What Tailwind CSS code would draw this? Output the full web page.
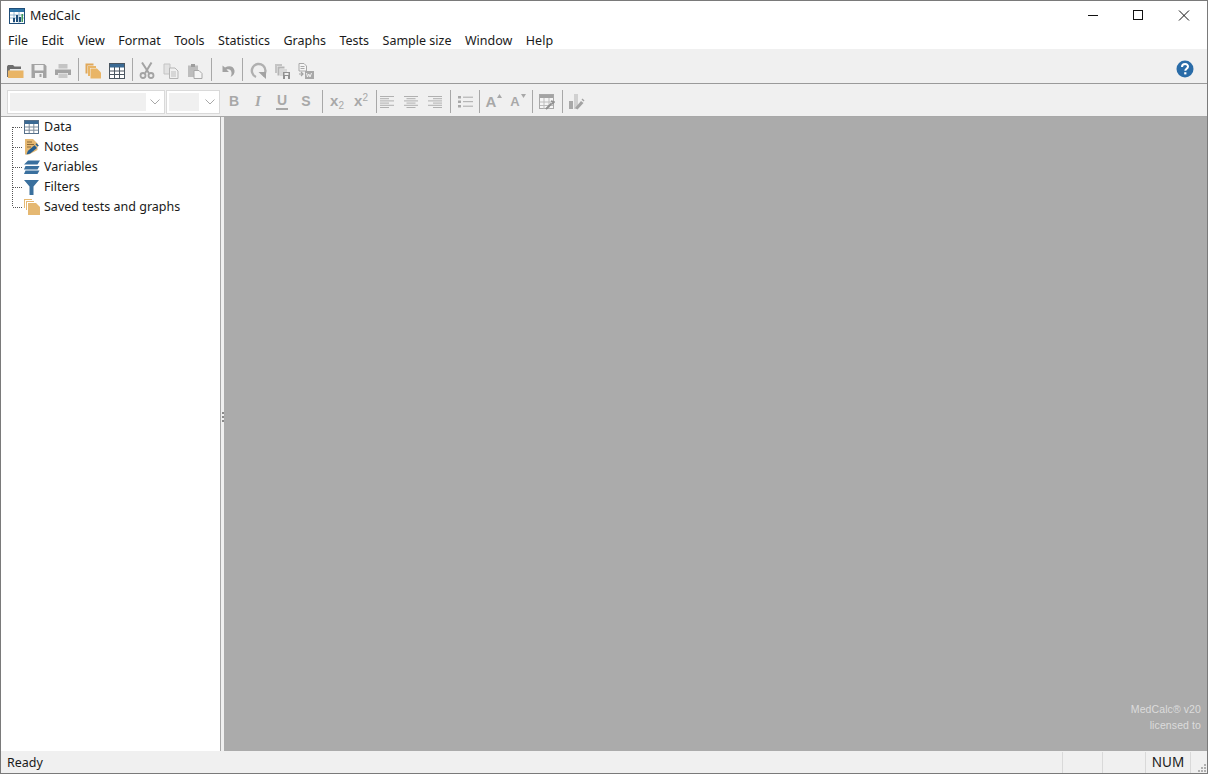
<!DOCTYPE html>
<html lang="en">
<head>
<meta charset="UTF-8">
<title>MedCalc</title>
<script src="https://cdn.jsdelivr.net/npm/@tailwindcss/browser@4"></script>
</head>
<body class="bg-white overflow-hidden">
<div class="w-[1208px] h-[774px] flex flex-col border border-[#7a7a7a] font-['Noto_Sans',sans-serif] text-[12.5px] text-[#1a1a1a] overflow-hidden">

  <!-- title bar -->
  <div class="h-[29px] flex items-center shrink-0 bg-white">
    <svg class="ml-[8px] w-4 h-4" viewBox="0 0 16 16">
      <rect x=".5" y=".5" width="15" height="15" fill="#fff" stroke="#1f4e79"/>
      <rect x="1" y="1" width="14" height="3" fill="#2e75a8"/>
      <path d="M1 7h14M1 10h14M5 4v11M10 4v11" stroke="#7fa8c8" stroke-width=".8"/>
      <path d="M4 14V10h2v4zM7 14V7h2v7zM10 14V9h2v5z" fill="#1f4e79"/>
      <path d="M12.5 14V6h1.500v8z" fill="#3f9a5a"/>
    </svg>
    <span class="ml-[5px] pt-[2px]">MedCalc</span>
    <div class="ml-auto flex items-center">
      <svg class="w-[46px] h-[29px]" viewBox="0 0 46 29"><path d="M19 14.500h10" stroke="#111"/></svg>
      <svg class="w-[46px] h-[29px]" viewBox="0 0 46 29"><rect x="18.500" y="9.500" width="9" height="9" fill="none" stroke="#111"/></svg>
      <svg class="w-[46px] h-[29px]" viewBox="0 0 46 29"><path d="M18 9.500l10 10M28 9.500l-10 10" stroke="#111"/></svg>
    </div>
  </div>

  <!-- menu -->
  <div class="h-[19px] flex items-center shrink-0 bg-white pl-[7px] gap-[13.5px] leading-none pt-[4px]">
    <span>File</span><span>Edit</span><span>View</span><span>Format</span><span>Tools</span><span>Statistics</span><span>Graphs</span><span>Tests</span><span>Sample size</span><span>Window</span><span>Help</span>
  </div>

  <!-- main toolbar -->
  <div class="h-[35px] flex items-center shrink-0 bg-[#f0f0f0] border-b border-[#9a9a9a] pl-[2px] pt-[9px]">
    <div class="w-6 flex justify-center"><svg class="w-[17px] h-[16px]" viewBox="0 0 17 16"><path d="M0 3.500 1 2h5l1.500 1.500H14V6H3L1 14H0z" fill="#6d6d6d"/><path d="M1 15V7.500h15.500V15z" fill="#e9b566"/></svg></div>
    <div class="w-6 flex justify-center"><svg class="w-[16px] h-[16px]" viewBox="0 0 16 16"><path d="M.5 1h13l2 2v12H.5z" fill="#a3a3a3"/><rect x="3.500" y="2" width="9" height="5.500" fill="#f0f0f0"/><rect x="4" y="10" width="8" height="5" fill="#f0f0f0"/><rect x="8.500" y="11" width="2" height="3" fill="#a3a3a3"/></svg></div>
    <div class="w-6 flex justify-center"><svg class="w-[16px] h-[16px]" viewBox="0 0 16 16"><rect x="3.500" y="1" width="9" height="4.500" fill="#c4c4c4"/><path d="M0 6.500h16V12h-3v-2H3v2H0z" fill="#a3a3a3"/><rect x="3.500" y="10.500" width="9" height="4.500" fill="#c9c9c9"/></svg></div>
    <div class="w-px h-[23px] -mt-[3px] ml-[3px] mr-[2px] bg-[#a8a8a8]"></div>
    <div class="w-6 flex justify-center"><svg class="w-[16px] h-[16px]" viewBox="0 0 16 16"><path d="M.5.500h8v2H2.500v8H.5z" fill="#e0a85a"/><path d="M3 3h8v2H5v8H3z" fill="#e9b566"/><path d="M5.500 5.500H12L16 9.500V15.500H5.500z" fill="#e9b566"/></svg></div>
    <div class="w-6 flex justify-center"><svg class="w-[16px] h-[16px]" viewBox="0 0 16 16"><rect x=".5" y=".5" width="15" height="15" fill="#fff" stroke="#4a5560"/><rect x="1" y="1" width="14" height="3.500" fill="#3a6a94"/><path d="M1 8h14M1 11.500h14M5.500 4v11M10.500 4v11" stroke="#4a5560"/></svg></div>
    <div class="w-px h-[23px] -mt-[3px] ml-[3px] mr-[2px] bg-[#a8a8a8]"></div>
    <div class="w-6 flex justify-center"><svg class="w-[16px] h-[17px]" viewBox="0 0 16 17"><path d="M3 .5 9.800 11M12.500 .5 6.200 11" stroke="#a3a3a3" stroke-width="2" fill="none"/><circle cx="4" cy="13.500" r="2.500" fill="none" stroke="#a3a3a3" stroke-width="1.800"/><circle cx="12" cy="13.500" r="2.500" fill="none" stroke="#a3a3a3" stroke-width="1.800"/></svg></div>
    <div class="w-6 flex justify-center"><svg class="w-[16px] h-[16px]" viewBox="0 0 16 16"><path d="M1 1h6v10H1z" fill="#e2e2e2" stroke="#c4c4c4"/><path d="M6.500 5H12l3 3v7.500H6.500z" fill="#f0f0f0" stroke="#b5b5b5"/><path d="M8 9h5M8 11h5M8 13h5" stroke="#bdbdbd"/></svg></div>
    <div class="w-6 flex justify-center"><svg class="w-[16px] h-[16px]" viewBox="0 0 16 16"><path d="M1 2.500h10V14H1z" fill="#bdbdbd"/><rect x="4" y="1" width="4" height="3" fill="#9d9d9d"/><path d="M7 7.500h5l3 3v5H7z" fill="#f5f5f5" stroke="#a8a8a8"/></svg></div>
    <div class="w-px h-[23px] -mt-[3px] ml-[4px] mr-[3px] bg-[#a8a8a8]"></div>
    <div class="w-6 flex justify-center"><svg class="w-[16px] h-[14px]" viewBox="0 0 16 14"><path d="M3.500 1.500v6.500h6.500L7.500 5.500c2.500-.8 4.500 0 5 3 .2 1.500-.2 3-1 4.500 3-1.500 4.500-4 4-6.500C14.800 2.500 10.500 1 6 3.500z" fill="#a3a3a3"/></svg></div>
    <div class="w-px h-[23px] -mt-[3px] ml-[3px] mr-[3px] bg-[#a8a8a8]"></div>
    <div class="w-6 flex justify-center"><svg class="w-[17px] h-[17px]" viewBox="0 0 17 17"><path d="M6 15A6.800 6.800 0 1 1 13 14" fill="none" stroke="#b0b0b0" stroke-width="2.400"/><path d="M8.500 10h7.500v7z" fill="#a3a3a3"/></svg></div>
    <div class="w-6 flex justify-center"><svg class="w-[16px] h-[16px]" viewBox="0 0 16 16"><path d="M1 1h7v2H3v7H1z" fill="#c4c4c4"/><path d="M3.500 3.500h7v2h-5v7h-2z" fill="#b5b5b5"/><rect x="6" y="6" width="7" height="7" fill="#d8d8d8"/><path d="M9 9h7v7H9z" fill="#909090"/><rect x="10.500" y="10" width="4" height="2" fill="#f0f0f0"/><rect x="11" y="13" width="3" height="3" fill="#f0f0f0"/></svg></div>
    <div class="w-6 flex justify-center"><svg class="w-[16px] h-[16px]" viewBox="0 0 16 16"><path d="M1 .5h5l2.500 2.500V8H1z" fill="#f5f5f5" stroke="#a8a8a8"/><path d="M2.500 3.500h4M2.500 5.500h4" stroke="#a8a8a8"/><path d="M1 11h4m-2-2 2 2-2 2" fill="none" stroke="#a3a3a3" stroke-width="1.200"/><rect x="7" y="8" width="9" height="8" fill="#a8a8a8"/><path d="M8.500 10l1 4 1.300-3 1.200 3 1.500-4" stroke="#f0f0f0" fill="none"/></svg></div>
    <svg class="ml-auto mr-[13px] -mt-[3px] w-[18px] h-[18px]" viewBox="0 0 18 18"><circle cx="9" cy="9" r="8.500" fill="#2a6ca8"/><path d="M6 7c0-4 6.300-3.800 6-.3-.2 2-2.700 2-2.700 4" fill="none" stroke="#fff" stroke-width="2"/><rect x="8.200" y="12.200" width="2.200" height="2.200" fill="#fff"/></svg>
  </div>

  <!-- format toolbar -->
  <div class="h-[33px] flex items-center shrink-0 bg-[#f0f0f0] border-b border-[#a8a8a8] pl-[6px] pt-[3px]">
    <div class="w-[158px] h-[24px] flex items-center bg-white border border-[#d9d9d9] pl-[2px]">
      <div class="w-[136px] h-[18px] bg-[#f0f0f0]"></div>
      <svg class="ml-[4px] w-[10px] h-[6px]" viewBox="0 0 10 6"><path d="M.5.500 5 5 9.500.5" fill="none" stroke="#a8a8a8"/></svg>
    </div>
    <div class="ml-[1px] w-[54px] h-[24px] flex items-center bg-white border border-[#d9d9d9] pl-[2px]">
      <div class="w-[30px] h-[18px] bg-[#f0f0f0]"></div>
      <svg class="ml-[6px] w-[10px] h-[6px]" viewBox="0 0 10 6"><path d="M.5.500 5 5 9.500.5" fill="none" stroke="#a8a8a8"/></svg>
    </div>
    <div class="w-[24px] ml-[2px] text-center font-['Liberation_Sans',sans-serif] font-bold text-[14px] text-[#a8a8a8]">B</div>
    <div class="w-[24px] text-center font-['Liberation_Serif',serif] font-bold italic text-[15px] text-[#a8a8a8]">I</div>
    <div class="w-[24px] flex justify-center"><span class="font-['Liberation_Sans',sans-serif] font-bold text-[14px] text-[#a8a8a8] border-b-2 border-[#a8a8a8] px-[1px] leading-[15px]">U</span></div>
    <div class="w-[24px] text-center font-['Liberation_Sans',sans-serif] font-bold text-[14px] text-[#a8a8a8]">S</div>
    <div class="w-px h-[23px] ml-[4px] mr-[2px] bg-[#a8a8a8]"></div>
    <div class="w-[24px] text-center font-['Liberation_Sans',sans-serif] font-bold text-[15px] text-[#a8a8a8]">x<sub class="text-[10px] font-normal">2</sub></div>
    <div class="w-[24px] text-center font-['Liberation_Sans',sans-serif] font-bold text-[15px] text-[#a8a8a8]">x<sup class="text-[10px] font-normal">2</sup></div>
    <div class="w-px h-[23px] ml-[3px] mr-[-2px] bg-[#a8a8a8]"></div>
    <div class="w-[24px] flex justify-center"><svg class="w-[14px] h-[12px]" viewBox="0 0 14 12"><path d="M0 .5h14M0 2.700h9M0 4.900h14M0 7.100h9M0 9.300h14M0 11.500h9" stroke="#a8a8a8" stroke-width=".9"/></svg></div>
    <div class="w-[24px] flex justify-center"><svg class="w-[14px] h-[12px]" viewBox="0 0 14 12"><path d="M0 .5h14M2.500 2.700h9M0 4.900h14M2.500 7.100h9M0 9.300h14M2.500 11.500h9" stroke="#a8a8a8" stroke-width=".9"/></svg></div>
    <div class="w-[24px] flex justify-center"><svg class="w-[14px] h-[12px]" viewBox="0 0 14 12"><path d="M0 .5h14M5 2.700h9M0 4.900h14M5 7.100h9M0 9.300h14M5 11.500h9" stroke="#a8a8a8" stroke-width=".9"/></svg></div>
    <div class="w-px h-[23px] ml-[3px] mr-[3px] bg-[#a8a8a8]"></div>
    <div class="w-[22px] flex justify-center"><svg class="w-[15px] h-[12px]" viewBox="0 0 15 12"><rect y="0" width="3" height="2.500" fill="#a8a8a8"/><rect y="4.500" width="3" height="2.500" fill="#a8a8a8"/><rect y="9" width="3" height="2.500" fill="#a8a8a8"/><path d="M5 1.200h10M5 5.700h10M5 10.200h10" stroke="#a8a8a8"/></svg></div>
    <div class="w-px h-[23px] ml-[3px] mr-[2px] bg-[#a8a8a8]"></div>
    <div class="w-[24px] flex justify-center items-start gap-px font-['Liberation_Sans',sans-serif] font-bold text-[#a8a8a8]">
      <span class="text-[15px] leading-[18px]">A</span>
      <svg class="w-[5px] h-[4px] mt-[1px]" viewBox="0 0 5 4"><path d="M0 4 2.500 0 5 4z" fill="#a8a8a8"/></svg>
    </div>
    <div class="w-[24px] flex justify-center items-start gap-px font-['Liberation_Sans',sans-serif] font-bold text-[#a8a8a8]">
      <span class="text-[13px] leading-[18px]">A</span>
      <svg class="w-[5px] h-[4px] mt-[1px]" viewBox="0 0 5 4"><path d="M0 0h5L2.500 4z" fill="#a8a8a8"/></svg>
    </div>
    <div class="w-px h-[23px] ml-[2px] mr-[2px] bg-[#a8a8a8]"></div>
    <div class="w-[24px] flex justify-center"><svg class="w-[16px] h-[16px]" viewBox="0 0 16 16"><rect x=".5" y=".5" width="14" height="14" fill="#f5f5f5" stroke="#a8a8a8"/><rect x="1" y="1" width="13" height="3" fill="#a3a3a3"/><path d="M1 8h13M1 11.500h13M5 4v11M10 4v11" stroke="#bdbdbd"/><path d="M7 15l5.500-5.500M12 7l3 1-2 2" stroke="#909090" stroke-width="1.800" fill="none"/></svg></div>
    <div class="w-px h-[23px] ml-[3px] mr-[2px] bg-[#a8a8a8]"></div>
    <div class="w-[24px] flex justify-center"><svg class="w-[16px] h-[16px]" viewBox="0 0 16 16"><rect x="0" y="7" width="4" height="8" fill="#a8a8a8"/><rect x="5" y="0" width="4" height="15" fill="#d0d0d0"/><path d="M6 14l6-7 2.500 2-6 6.500z" fill="#a3a3a3"/><path d="M12.500 5.500l1-1 2 2-1 1z" fill="#a3a3a3"/></svg></div>
  </div>

  <!-- body -->
  <div class="flex-1 flex min-h-0">
    <div class="w-[219px] shrink-0 bg-white">
      <div class="h-5 flex items-center pl-[11px]">
        <svg class="w-[12px] h-5" viewBox="0 0 12 20"><path d="M.5 10v10M1 10.500h10" stroke="#555" stroke-dasharray="1 1"/></svg>
        <svg class="w-[15px] h-[14px]" viewBox="0 0 15 14"><rect x=".5" y=".5" width="14" height="13" fill="#fff" stroke="#56708a"/><rect x="1" y="1" width="13" height="3" fill="#3a6a94"/><path d="M1 7h13M1 10.200h13M5.200 4v9M9.800 4v9" stroke="#7d8c9a"/></svg>
        <span class="ml-[5px]">Data</span>
      </div>
      <div class="h-5 flex items-center pl-[11px]">
        <svg class="w-[12px] h-5" viewBox="0 0 12 20"><path d="M.5 0v20M1 10.500h10" stroke="#555" stroke-dasharray="1 1"/></svg>
        <svg class="w-[15px] h-[16px]" viewBox="0 0 15 16"><path d="M1 0h8l4.500 4.500V11L5 15.500H1z" fill="#e5b872"/><path d="M3 3h5M3 5.500h7M3 8h4" stroke="#8a6a3a"/><path d="M2.500 15.500 3.800 12 10.500 6.300l2.500 2.700-6.800 5.400z" fill="#245d8f"/><path d="M11.500 5.300l1-1 2.300 2.300-1 1.200z" fill="#245d8f"/></svg>
        <span class="ml-[5px]">Notes</span>
      </div>
      <div class="h-5 flex items-center pl-[11px]">
        <svg class="w-[12px] h-5" viewBox="0 0 12 20"><path d="M.5 0v20M1 10.500h10" stroke="#555" stroke-dasharray="1 1"/></svg>
        <svg class="w-[16px] h-[15px]" viewBox="0 0 16 15"><path d="M4 .5h12l-2.500 4H0z" fill="#3a709e"/><path d="M1.500 6h14l-2 3.500H0z" fill="#3a709e"/><path d="M1.500 10.500h14l-2 3.500H0z" fill="#3a709e"/></svg>
        <span class="ml-[4px]">Variables</span>
      </div>
      <div class="h-5 flex items-center pl-[11px]">
        <svg class="w-[12px] h-5" viewBox="0 0 12 20"><path d="M.5 0v20M1 10.500h10" stroke="#555" stroke-dasharray="1 1"/></svg>
        <svg class="w-[15px] h-[15px]" viewBox="0 0 15 15"><path d="M0 0h15L9.500 6.500V15h-4V6.500z" fill="#3a709e"/></svg>
        <span class="ml-[5px]">Filters</span>
      </div>
      <div class="h-5 flex items-center pl-[11px]">
        <svg class="w-[12px] h-5" viewBox="0 0 12 20"><path d="M.5 0v10M1 10.500h10" stroke="#555" stroke-dasharray="1 1"/></svg>
        <svg class="w-[16px] h-[16px]" viewBox="0 0 16 16"><path d="M0 0h8v1H1v8H0z" fill="#e5b872"/><path d="M2 2h8v1H3v8H2z" fill="#e5b872"/><path d="M4 4h8l4 4v8H4z" fill="#e5b872"/></svg>
        <span class="ml-[4px]">Saved tests and graphs</span>
      </div>
    </div>
    <div class="w-[4px] shrink-0 bg-[#f0f0f0] border-l border-[#a8a8a8] flex flex-col justify-center items-center gap-[2px] pb-[34px]">
      <div class="w-[2px] h-[2px] bg-[#8a8a8a]"></div>
      <div class="w-[2px] h-[2px] bg-[#8a8a8a]"></div>
      <div class="w-[2px] h-[2px] bg-[#8a8a8a]"></div>
    </div>
    <div class="flex-1 bg-[#ababab] flex flex-col justify-end items-end pr-[6px] pb-[18px] font-['Liberation_Sans',sans-serif] text-[10.5px] leading-[16px] text-[#dcdcdc] tracking-[0.1px]">
      <div>MedCalc® v20</div>
      <div>licensed to</div>
    </div>
  </div>

  <!-- status bar -->
  <div class="h-[22px] flex items-center shrink-0 bg-[#f0f0f0] pt-[1px]">
    <span class="ml-[6px] pt-[2px]">Ready</span>
    <div class="ml-auto h-full flex">
      <div class="w-[40px] border-l border-[#d9d9d9]"></div>
      <div class="w-[43px] border-l border-[#d9d9d9]"></div>
      <div class="w-[45px] border-l border-[#d9d9d9] flex items-center justify-center text-[13.5px]">NUM</div>
      <div class="w-[17px] border-l border-[#d9d9d9] flex items-end justify-end">
        <svg class="w-[10px] h-[10px]" viewBox="0 0 10 10"><path d="M7 1h2v2H7zM4 4h2v2H4zM7 4h2v2H7zM1 7h2v2H1zM4 7h2v2H4zM7 7h2v2H7z" fill="#b0b0b0"/></svg>
      </div>
    </div>
  </div>
</div>
</body>
</html>
